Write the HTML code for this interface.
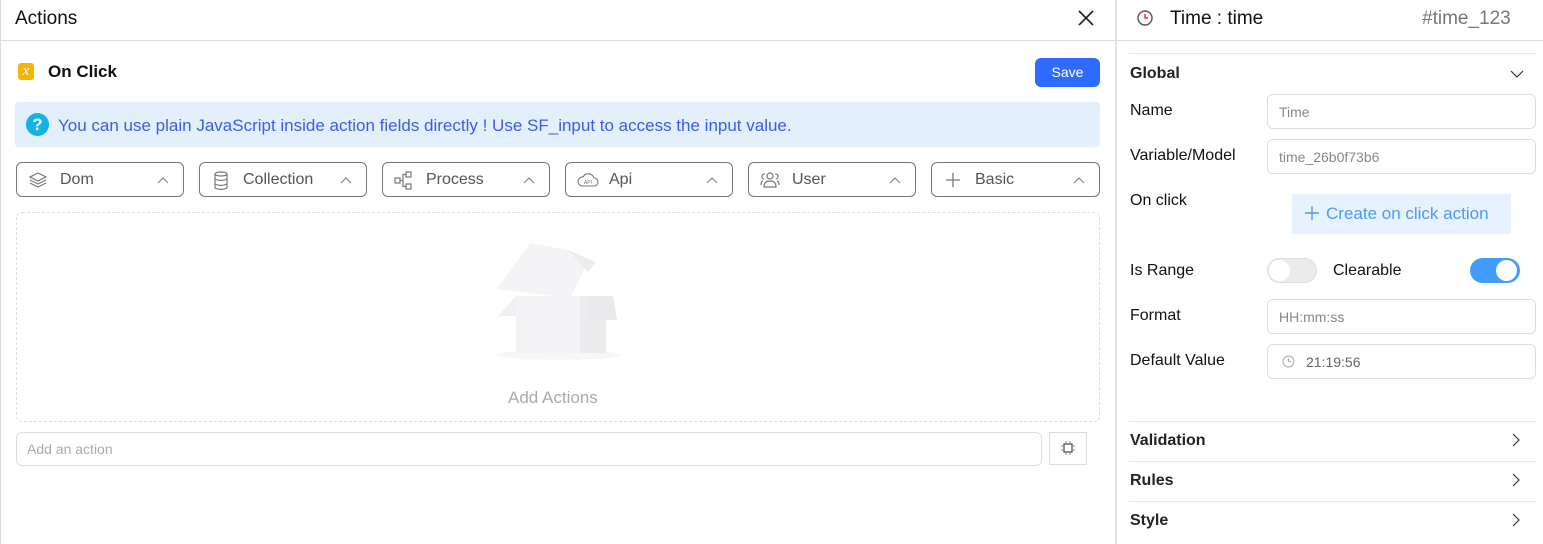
<!DOCTYPE html>
<html><head><meta charset="utf-8"><style>
*{box-sizing:border-box;margin:0;padding:0}
body{width:1543px;height:544px;background:#fff;font-family:"Liberation Sans",sans-serif;position:relative;overflow:hidden;color:#111}
.a{position:absolute}
.btn{position:absolute;top:162px;height:35px;border:1px solid #777;border-radius:6px;font-size:16px;color:#555}
.btn span{position:absolute;left:43px;top:8px}
.btn svg.ic{position:absolute;left:11px;top:8px}
.btn .car{position:absolute;right:14px;top:13px}
.lbl{position:absolute;left:1130px;font-size:16px;color:#111}
.inp{position:absolute;left:1267px;width:269px;height:35px;border:1px solid #ddd;border-radius:6px;font-size:14px;color:#888;padding:9px 11px}
.sec{position:absolute;left:1130px;font-size:16px;font-weight:bold;color:#222}
.hl{position:absolute;left:1129px;width:407px;height:1px;background:#e6e6e6}
</style></head><body>
<div class="a" style="left:0;top:0;width:1px;height:544px;background:#ddd"></div>
<div class="a" style="left:1115px;top:0;width:2px;height:544px;background:#e2e2e2"></div>
<div class="a" style="left:0;top:40px;width:1543px;height:1px;background:#ddd"></div>
<div class="a" style="left:15px;top:8px;font-size:19px">Actions</div>
<svg class="a" style="left:1077px;top:9px" width="18" height="18"><path d="M2 2L16 16M16 2L2 16" stroke="#222" stroke-width="1.6"/></svg>

<div class="a" style="left:18px;top:63px;width:16px;height:17px;background:#f8b500;border-radius:3px;color:#fff;font-family:'Liberation Serif',serif;font-style:italic;font-size:15px;text-align:center;line-height:16px">x</div>
<div class="a" style="left:48px;top:62px;font-size:17px;font-weight:bold">On Click</div>
<div class="a" style="left:1035px;top:58px;width:65px;height:29px;background:#2f6bff;border-radius:6px;color:#fff;font-size:14px;text-align:center;line-height:29px">Save</div>

<div class="a" style="left:15px;top:102px;width:1085px;height:45px;background:#e3f0fc;border-radius:3px"></div>
<div class="a" style="left:26px;top:113px;width:23px;height:23px;border-radius:50%;background:#14b1e7;color:#fff;font-weight:bold;font-size:17px;text-align:center;line-height:23px">?</div>
<div class="a" style="left:58px;top:116px;font-size:17px;color:#3e5ce8">You can use plain JavaScript inside action fields directly ! Use SF_input to access the input value.</div>

<div class="btn" style="left:16px;width:168px"><svg class="ic" width="20" height="18" viewBox="0 0 20 18"><g fill="none" stroke="#777" stroke-width="1.2"><path d="M10 2L18 6L10 10L2 6Z"/><path d="M2 9L10 13L18 9"/><path d="M2 12L10 16L18 12"/></g></svg><span>Dom</span><svg class="car" width="12" height="8"><path d="M1 7L6 2L11 7" fill="none" stroke="#888" stroke-width="1.2"/></svg></div>
<div class="btn" style="left:199px;width:168px"><svg class="ic" width="20" height="20" viewBox="0 0 20 20"><g fill="none" stroke="#777" stroke-width="1.2"><ellipse cx="10" cy="3" rx="6" ry="2"/><path d="M4 3V17Q10 20 16 17V3M4 8Q10 11 16 8M4 13Q10 16 16 13"/></g></svg><span>Collection</span><svg class="car" width="12" height="8"><path d="M1 7L6 2L11 7" fill="none" stroke="#888" stroke-width="1.2"/></svg></div>
<div class="btn" style="left:382px;width:168px"><svg class="ic" width="20" height="20" viewBox="0 0 20 20"><g fill="none" stroke="#777" stroke-width="1.2"><rect x="1" y="7" width="5" height="5"/><rect x="12" y="1" width="5" height="5"/><rect x="12" y="13" width="5" height="5"/><path d="M6 9.5H9V3.5H12M9 9.5V15.5H12"/></g></svg><span>Process</span><svg class="car" width="12" height="8"><path d="M1 7L6 2L11 7" fill="none" stroke="#888" stroke-width="1.2"/></svg></div>
<div class="btn" style="left:565px;width:168px"><svg class="ic" width="22" height="18" viewBox="0 0 22 18"><path d="M5 15H17A4 4 0 0 0 17 7A6 6 0 0 0 6 6A4.5 4.5 0 0 0 5 15Z" fill="none" stroke="#777" stroke-width="1.1"/><text x="11" y="13" font-size="5" text-anchor="middle" fill="#777" font-family="Liberation Sans">API</text></svg><span>Api</span><svg class="car" width="12" height="8"><path d="M1 7L6 2L11 7" fill="none" stroke="#888" stroke-width="1.2"/></svg></div>
<div class="btn" style="left:748px;width:168px"><svg class="ic" width="20" height="18" viewBox="0 0 20 18"><g fill="none" stroke="#777" stroke-width="1.2"><circle cx="10" cy="5" r="3"/><path d="M4 16Q4 10 10 10Q16 10 16 16Z"/><path d="M5 3A2.5 2.5 0 0 0 4 8M15 3A2.5 2.5 0 0 1 16 8M1 14Q1 10 3 10M19 14Q19 10 17 10"/></g></svg><span>User</span><svg class="car" width="12" height="8"><path d="M1 7L6 2L11 7" fill="none" stroke="#888" stroke-width="1.2"/></svg></div>
<div class="btn" style="left:931px;width:169px"><svg class="ic" width="20" height="18" viewBox="0 0 20 18"><path d="M10 2V16M3 9H17" stroke="#777" stroke-width="1.3"/></svg><span>Basic</span><svg class="car" width="12" height="8"><path d="M1 7L6 2L11 7" fill="none" stroke="#888" stroke-width="1.2"/></svg></div>

<div class="a" style="left:16px;top:212px;width:1084px;height:210px;border:1px dashed #ddd;border-radius:6px"></div>
<svg class="a" style="left:490px;top:230px" width="135" height="135" viewBox="490 230 135 135">
<ellipse cx="558" cy="355" rx="62" ry="5" fill="#f6f7fa"/>
<path d="M497 289L530 243L568 250L588 262L570 298Z" fill="#f4f4f6"/>
<path d="M568 250L596 262L588 272Z" fill="#ececef"/>
<path d="M516 296H580V353H516Z" fill="#f3f3f5"/>
<path d="M580 296H606V353H580Z" fill="#ebebee"/>
<path d="M498 316L516 296V316Z" fill="#f0f0f2"/>
<path d="M588 296H613L617 320H590Z" fill="#e9e9ec"/>
</svg>
<div class="a" style="left:508px;top:388px;font-size:17px;color:#aaa">Add Actions</div>

<div class="a" style="left:16px;top:432px;width:1026px;height:34px;border:1px solid #ddd;border-radius:6px;font-size:14px;color:#aaa;padding:8px 10px">Add an action</div>
<div class="a" style="left:1049px;top:432px;width:38px;height:33px;border:1px solid #ddd"></div>
<svg class="a" style="left:1061px;top:441px" width="14" height="14"><rect x="3" y="3" width="8" height="8" fill="none" stroke="#555" stroke-width="1.3"/><path d="M5 0V3M9 0V3M5 11V14M9 11V14M0 5H3M0 9H3M11 5H14M11 9H14" stroke="#888"/></svg>

<svg class="a" style="left:1136px;top:9px" width="18" height="18"><circle cx="9" cy="9" r="7" fill="none" stroke="#555" stroke-width="1.4"/><path d="M9 5V9H12" fill="none" stroke="#e33" stroke-width="1.5"/></svg>
<div class="a" style="left:1170px;top:8px;font-size:19px">Time : time</div>
<div class="a" style="left:1422px;top:8px;font-size:19px;color:#777">#time_123</div>
<div class="hl" style="top:53px"></div>
<div class="sec" style="top:65px">Global</div>
<svg class="a" style="left:1510px;top:70px" width="14" height="9"><path d="M1 1L7 7L13 1" fill="none" stroke="#333" stroke-width="1.2"/></svg>
<div class="lbl" style="top:102px">Name</div>
<div class="inp" style="top:94px">Time</div>
<div class="lbl" style="top:147px">Variable/Model</div>
<div class="inp" style="top:139px">time_26b0f73b6</div>
<div class="lbl" style="top:192px">On click</div>
<div class="a" style="left:1292px;top:194px;width:219px;height:40px;background:#e8f2fe;color:#4a9bf5;font-size:17px;padding:9px 0 0 12px"><svg width="16" height="16" style="position:relative;top:2px;margin-right:6px"><path d="M8 1V15M1 8H15" stroke="#4a9bf5" stroke-width="1.4"/></svg>Create on click action</div>
<div class="lbl" style="top:262px">Is Range</div>
<div class="a" style="left:1267px;top:258px;width:50px;height:25px;border-radius:13px;background:#ebebeb;border:1px solid #ddd"><div style="position:absolute;left:1px;top:1px;width:21px;height:21px;border-radius:50%;background:#fff"></div></div>
<div class="lbl" style="left:1333px;top:262px">Clearable</div>
<div class="a" style="left:1470px;top:258px;width:50px;height:25px;border-radius:13px;background:#419dfb"><div style="position:absolute;right:3px;top:2px;width:21px;height:21px;border-radius:50%;background:#fff"></div></div>
<div class="lbl" style="top:307px">Format</div>
<div class="inp" style="top:299px">HH:mm:ss</div>
<div class="lbl" style="top:352px">Default Value</div>
<div class="inp" style="top:344px;padding-left:38px;color:#666">21:19:56</div>
<svg class="a" style="left:1282px;top:355px" width="13" height="13"><circle cx="6.5" cy="6.5" r="5.5" fill="none" stroke="#aaa"/><path d="M6.5 3.5V6.5H9" fill="none" stroke="#aaa"/></svg>
<div class="hl" style="top:421px"></div>
<div class="sec" style="top:432px">Validation</div>
<div class="hl" style="top:461px"></div>
<div class="sec" style="top:472px">Rules</div>
<div class="hl" style="top:501px"></div>
<div class="sec" style="top:512px">Style</div>
<svg class="a" style="left:1512px;top:433px" width="9" height="14"><path d="M1 1L7 7L1 13" fill="none" stroke="#333" stroke-width="1.2"/></svg>
<svg class="a" style="left:1512px;top:473px" width="9" height="14"><path d="M1 1L7 7L1 13" fill="none" stroke="#333" stroke-width="1.2"/></svg>
<svg class="a" style="left:1512px;top:513px" width="9" height="14"><path d="M1 1L7 7L1 13" fill="none" stroke="#333" stroke-width="1.2"/></svg>
</body></html>
